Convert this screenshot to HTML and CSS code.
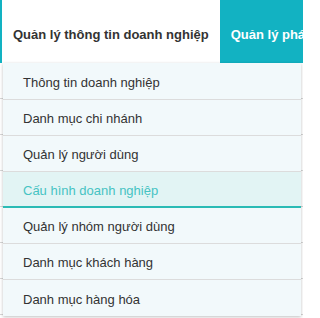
FILE: index.html
```html
<!DOCTYPE html>
<html lang="vi">
<head>
<meta charset="utf-8">
<link rel="stylesheet" href="styles.css">
</head>
<body>
<div class="page">
  <nav class="topnav">
    <div class="tab tab-active">Quản lý thông tin doanh nghiệp</div>
    <div class="tab">Quản lý phát hành</div>
  </nav>
  <div class="content">
    <div class="row"></div>
    <div class="row"></div>
    <div class="row"></div>
    <div class="row"></div>
    <div class="row"></div>
    <div class="row"></div>
    <div class="row"></div>
  </div>
  <ul class="dropdown">
    <li class="item">Thông tin doanh nghiệp</li>
    <li class="item">Danh mục chi nhánh</li>
    <li class="item">Quản lý người dùng</li>
    <li class="item item-active">Cấu hình doanh nghiệp</li>
    <li class="item">Quản lý nhóm người dùng</li>
    <li class="item">Danh mục khách hàng</li>
    <li class="item">Danh mục hàng hóa</li>
  </ul>
</div>
</body>
</html>
```
FILE: styles.css
```css
html, body {
  margin: 0;
  padding: 0;
  background: #ffffff;
}
.page {
  position: relative;
  width: 303px;
  height: 318px;
  overflow: hidden;
  font-family: "Liberation Sans", Arial, sans-serif;
}
.topnav {
  display: flex;
  height: 63px;
  background: #12b2c2;
  padding-left: 2px;
  white-space: nowrap;
}
.tab {
  display: flex;
  align-items: center;
  padding: 6px 11px 0 11px;
  font-size: 13px;
  font-weight: bold;
  color: #ffffff;
}
.tab-active {
  background: #ffffff;
  color: #333333;
  width: 196px;
  padding-left: 11px;
}
.content {
  display: flex;
  flex-direction: column;
}
.row {
  height: 36px;
  border-bottom: 1px solid #d6d6d6;
  box-sizing: border-box;
}
.dropdown {
  position: absolute;
  left: 3px;
  top: 63px;
  width: 298px;
  margin: 0;
  padding: 1px 0 0 0;
  list-style: none;
  background: #f2f9fb;
  box-shadow: 0 1px 3px rgba(0, 0, 0, 0.25);
}
.item {
  height: 36px;
  box-sizing: border-box;
  display: flex;
  align-items: center;
  padding: 2px 0 0 20px;
  font-size: 13px;
  color: #333333;
  border-bottom: 1px solid #dcdcdc;
}
.item:last-child {
  border-bottom: none;
}
.item-active {
  background: #e2f4f4;
  color: #46c3c3;
  border-bottom: 2px solid #2bbbb5;
}
```
